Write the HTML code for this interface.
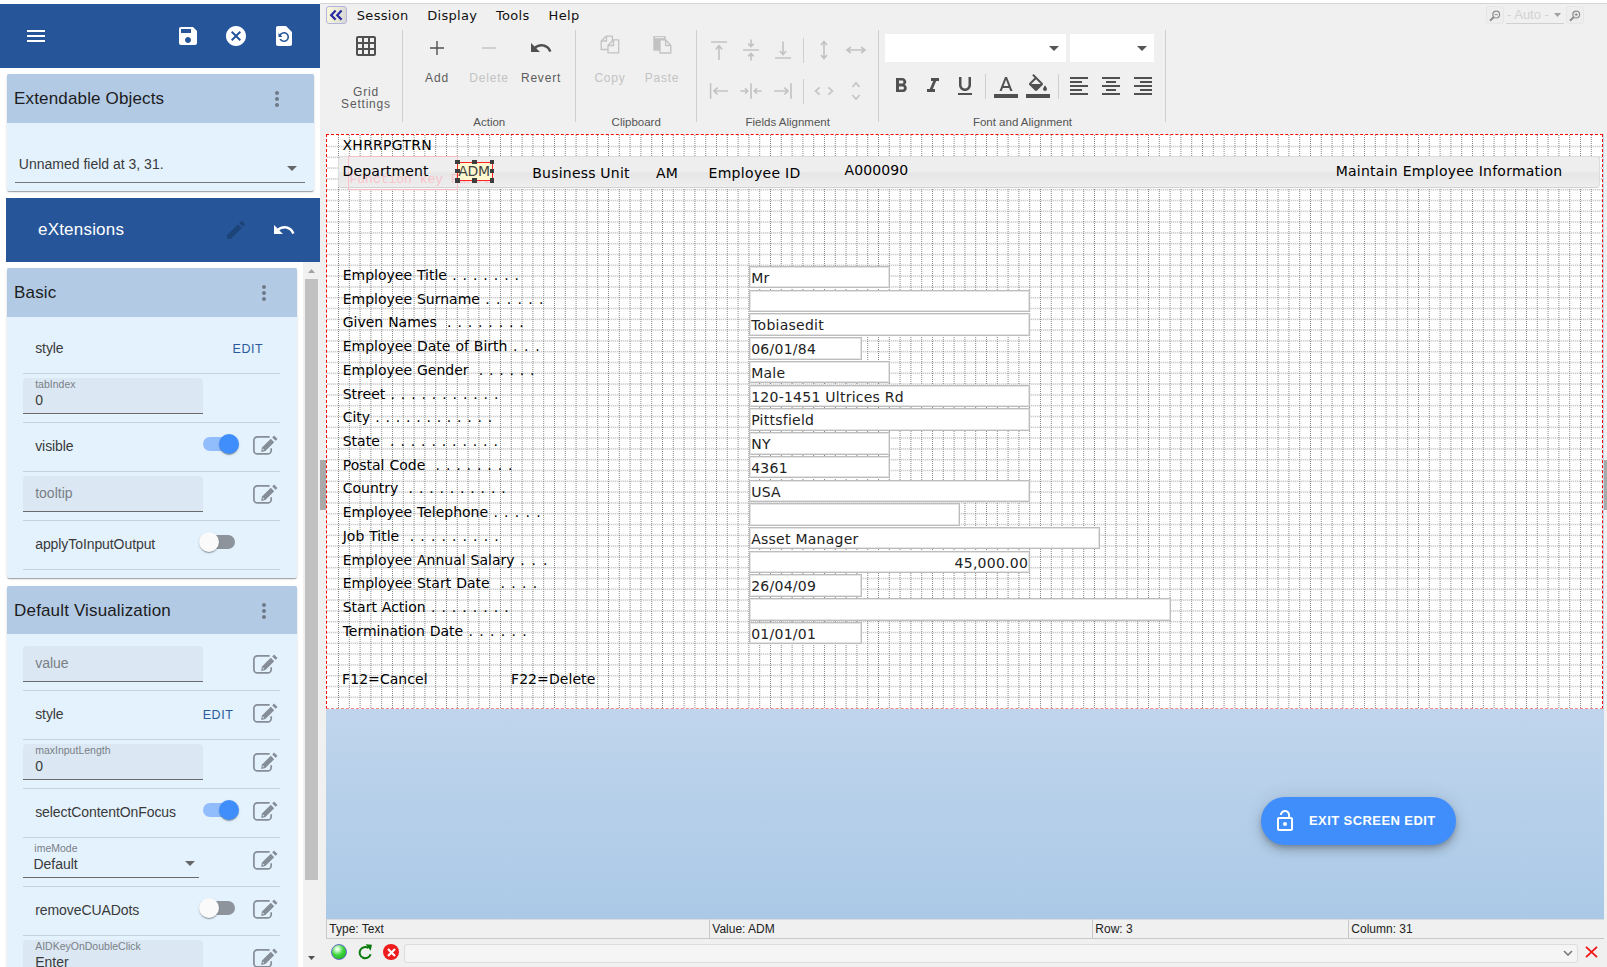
<!DOCTYPE html>
<html lang="en">
<head>
<meta charset="utf-8">
<title>Screen Edit</title>
<style>
*{box-sizing:border-box;margin:0;padding:0}
html,body{width:1607px;height:967px;overflow:hidden;background:#fff}
body{position:relative;font-family:"Liberation Sans",sans-serif;color:#212121}
.abs{position:absolute}
svg{display:block}
/* ---------- left panel ---------- */
#left{position:absolute;left:0;top:0;width:320px;height:967px;background:#fff;overflow:hidden}
.bluebar{position:absolute;background:#265699;color:#fff}
.card{position:absolute;background:#e4f2fe;box-shadow:0 2px 1px -1px rgba(0,0,0,.2),0 1px 1px 0 rgba(0,0,0,.14),0 1px 3px 0 rgba(0,0,0,.12);border-radius:2px}
.chead{position:absolute;left:0;top:0;right:0;height:48.5px;background:#b3cae5;border-radius:2px 2px 0 0}
.ctitle{position:absolute;left:7.6px;top:1px;line-height:48px;font-size:17px;letter-spacing:.15px;color:#1c1c1c;white-space:nowrap}
.dots{position:absolute;width:24px;height:24px;fill:#6f7a88}
.row{position:absolute;left:16.5px;width:257px;height:49px;border-bottom:1px solid #c5d3e0}
.lbl{position:absolute;left:12.2px;top:-1px;line-height:48px;font-size:14px;letter-spacing:-.08px;color:#3a3a3a;white-space:nowrap}
.fld{position:absolute;left:0;top:4px;width:180px;height:36px;background:#dbe8f4;border-bottom:1px solid #6b6b6b;border-radius:4px 4px 0 0}
.fld .fl{position:absolute;left:12.2px;top:0;font-size:10.5px;line-height:12px;color:#7a7f85;white-space:nowrap}
.fld .fv{position:absolute;left:12.2px;top:13px;font-size:14px;line-height:18px;color:#3a3a3a;white-space:nowrap}
.fld .ph{position:absolute;left:12.2px;top:0;font-size:14px;line-height:35px;color:#7a7f85;white-space:nowrap}
.editbtn{position:absolute;top:0;line-height:48px;font-size:12.5px;letter-spacing:.55px;color:#2a5a9c;white-space:nowrap}
.pe{position:absolute;left:229px;top:12px;width:26px;height:22px}
.sw{position:absolute;left:180.2px;top:14px;width:32px;height:14px;border-radius:7px;background:#8d949c}
.sw i{position:absolute;left:-4px;top:-3px;width:20px;height:20px;border-radius:50%;background:#fafafa;box-shadow:0 2px 1px -1px rgba(0,0,0,.2),0 1px 1px 0 rgba(0,0,0,.14),0 1px 3px 0 rgba(0,0,0,.12)}
.sw.on{background:#92bdfc}
.sw.on i{left:16px;background:#3f8efc}
/* ---------- main ---------- */
#main{position:absolute;left:320px;top:0;width:1287px;height:967px;background:#f0f0f0}
.dv{font-family:"DejaVu Sans","Liberation Sans",sans-serif}
.t{position:absolute;white-space:pre;font-family:"DejaVu Sans","Liberation Sans",sans-serif;font-size:14px;letter-spacing:0;line-height:16px;color:#000}
.inp{position:absolute;height:22.4px;background:#fff;border:1px solid #bdbdbd;box-shadow:inset 0 0 0 1px #e4e4e4;font-family:"DejaVu Sans","Liberation Sans",sans-serif;font-size:14px;letter-spacing:.25px;line-height:23px;color:#222;white-space:pre;padding:0 0 0 1.6px;overflow:hidden}
.tb{position:absolute;white-space:nowrap;font-size:12px;letter-spacing:.8px;color:#5c5c5c;line-height:14px;text-align:center}
.tb.dis{color:#c3c3c3}
.grp{position:absolute;white-space:nowrap;font-size:11.5px;color:#555;line-height:14px}
.vsep{position:absolute;width:1px;background:#cfcfcf}
.menu{position:absolute;top:8px;font-family:"DejaVu Sans","Liberation Sans",sans-serif;font-size:13px;letter-spacing:.3px;line-height:16px;color:#111;white-space:nowrap}
.st{position:absolute;top:919px;height:20px;border-left:1px solid #c8c8c8;border-top:1px solid #dcdcdc;border-bottom:1px solid #c8c8c8;font-size:12px;line-height:18px;padding-left:2.3px;color:#222;white-space:nowrap}
</style>
</head>
<body>
<div id="left">
<div class="bluebar" style="left:0;top:4px;width:320px;height:64px"></div>
<svg class="abs" style="left:24px;top:24px" width="24" height="24" viewBox="0 0 24 24" fill="#fff" ><path d="M3 18h18v-2H3v2zm0-5h18v-2H3v2zm0-7v2h18V6H3z"/></svg>
<svg class="abs" style="left:176px;top:24px" width="24" height="24" viewBox="0 0 24 24" fill="#fff" ><path d="M17 3H5c-1.11 0-2 .9-2 2v14c0 1.1.89 2 2 2h14c1.1 0 2-.9 2-2V7l-4-4zm-5 16c-1.66 0-3-1.34-3-3s1.34-3 3-3 3 1.34 3 3-1.34 3-3 3zm3-10H5V5h10v4z"/></svg>
<svg class="abs" style="left:224px;top:24px" width="24" height="24" viewBox="0 0 24 24" fill="#fff" ><path d="M12 2C6.47 2 2 6.47 2 12s4.47 10 10 10 10-4.47 10-10S17.53 2 12 2zm5 13.59L15.59 17 12 13.41 8.41 17 7 15.59 10.59 12 7 8.41 8.41 7 12 10.59 15.59 7 17 8.41 13.41 12 17 15.59z"/></svg>
<svg class="abs" style="left:272px;top:24px" width="24" height="24" viewBox="0 0 24 24" fill="#fff" ><path d="M14 2H6c-1.1 0-1.99.9-1.99 2L4 20c0 1.1.89 2 1.99 2H18c1.1 0 2-.9 2-2V8l-6-6zm-2 16c-2.05 0-3.81-1.24-4.58-3h1.71c.63.9 1.68 1.5 2.87 1.5 1.93 0 3.5-1.57 3.5-3.5S13.93 9.5 12 9.5c-1.35 0-2.52.78-3.1 1.9l1.6 1.6h-4V9l1.3 1.3C8.69 8.92 10.23 8 12 8c2.76 0 5 2.24 5 5s-2.24 5-5 5z"/></svg>
<div class="card" style="left:6.5px;top:74px;width:307px;height:117.3px"><div class="chead"></div><div class="ctitle">Extendable Objects</div><svg class="abs" style="left:258px;top:12.5px" width="24" height="24" viewBox="0 0 24 24" fill="#6f7a88" ><path d="M12 8c1.1 0 2-.9 2-2s-.9-2-2-2-2 .9-2 2 .9 2 2 2zm0 2c-1.1 0-2 .9-2 2s.9 2 2 2 2-.9 2-2-.9-2-2-2zm0 6c-1.1 0-2 .9-2 2s.9 2 2 2 2-.9 2-2-.9-2-2-2z"/></svg><div class="abs" style="left:12.3px;top:82px;font-size:14px;line-height:16px;color:#3a3a3a;white-space:nowrap">Unnamed field at 3, 31.</div><div class="abs" style="left:8px;top:108px;width:290px;height:1px;background:#777"></div><svg class="abs" style="left:280px;top:92px" width="10" height="5" viewBox="0 0 10 5"><path d="M0 0h10L5 5z" fill="#666"/></svg></div>
<div class="bluebar" style="left:6px;top:198px;width:314px;height:64px"></div>
<div class="abs" style="left:38px;top:198px;line-height:63px;font-size:17px;letter-spacing:.2px;color:#fff;white-space:nowrap">eXtensions</div>
<svg class="abs" style="left:224px;top:218px" width="24" height="24" viewBox="0 0 24 24" fill="#1d4479" ><path d="M3 17.25V21h3.75L17.81 9.94l-3.75-3.75L3 17.25zM20.71 7.04c.39-.39.39-1.02 0-1.41l-2.34-2.34c-.39-.39-1.02-.39-1.41 0l-1.83 1.83 3.75 3.75 1.83-1.83z"/></svg>
<svg class="abs" style="left:272px;top:218px" width="24" height="24" viewBox="0 0 24 24" fill="#fff" ><path d="M12.5 8c-2.65 0-5.05.99-6.9 2.6L2 7v9h9l-3.62-3.62c1.39-1.16 3.16-1.88 5.12-1.88 3.54 0 6.55 2.31 7.6 5.5l2.37-.78C21.08 11.03 17.15 8 12.5 8z"/></svg>
<div class="card" style="left:6.5px;top:268px;width:290px;height:309.8px"><div class="chead" style="height:48.5px"></div><div class="ctitle">Basic</div><svg class="abs" style="left:245px;top:12.5px" width="24" height="24" viewBox="0 0 24 24" fill="#6f7a88" ><path d="M12 8c1.1 0 2-.9 2-2s-.9-2-2-2-2 .9-2 2 .9 2 2 2zm0 2c-1.1 0-2 .9-2 2s.9 2 2 2 2-.9 2-2-.9-2-2-2zm0 6c-1.1 0-2 .9-2 2s.9 2 2 2 2-.9 2-2-.9-2-2-2z"/></svg><div class="row" style="top:57px"><div class="lbl">style</div><div class="editbtn" style="left:209.6px">EDIT</div></div><div class="row" style="top:106px"><div class="fld"><div class="fl">tabIndex</div><div class="fv">0</div></div></div><div class="row" style="top:155px"><div class="lbl">visible</div><div class="sw on"><i></i></div><svg class="abs" style="left:228px;top:11px" width="28" height="24" viewBox="0 0 28 24"><path d="M18.6 2.95H6.4a3.5 3.5 0 0 0-3.5 3.5v10a3.5 3.5 0 0 0 3.5 3.5h10.3a3.5 3.5 0 0 0 3.5-3.5v-2.3" fill="none" stroke="#858d96" stroke-width="1.7"/><path d="M10.1 17.9l.9-4.3 8.8-8.8 3.4 3.4-8.8 8.8z" fill="#858d96"/><path d="M11.6 16.3l.35-1.7 1.35 1.35z" fill="#e4f2fe"/><path d="M21.2 3.4l1.9-1.9 3.4 3.4-1.9 1.9z" fill="#858d96"/></svg></div><div class="row" style="top:204px"><div class="fld"><div class="ph">tooltip</div></div><svg class="abs" style="left:228px;top:11px" width="28" height="24" viewBox="0 0 28 24"><path d="M18.6 2.95H6.4a3.5 3.5 0 0 0-3.5 3.5v10a3.5 3.5 0 0 0 3.5 3.5h10.3a3.5 3.5 0 0 0 3.5-3.5v-2.3" fill="none" stroke="#858d96" stroke-width="1.7"/><path d="M10.1 17.9l.9-4.3 8.8-8.8 3.4 3.4-8.8 8.8z" fill="#858d96"/><path d="M11.6 16.3l.35-1.7 1.35 1.35z" fill="#e4f2fe"/><path d="M21.2 3.4l1.9-1.9 3.4 3.4-1.9 1.9z" fill="#858d96"/></svg></div><div class="row" style="top:253px"><div class="lbl">applyToInputOutput</div><div class="sw"><i></i></div></div></div>
<div class="card" style="left:6.5px;top:586px;width:290px;height:460px"><div class="chead" style="height:48px"></div><div class="ctitle">Default Visualization</div><svg class="abs" style="left:245px;top:12.5px" width="24" height="24" viewBox="0 0 24 24" fill="#6f7a88" ><path d="M12 8c1.1 0 2-.9 2-2s-.9-2-2-2-2 .9-2 2 .9 2 2 2zm0 2c-1.1 0-2 .9-2 2s.9 2 2 2 2-.9 2-2-.9-2-2-2zm0 6c-1.1 0-2 .9-2 2s.9 2 2 2 2-.9 2-2-.9-2-2-2z"/></svg><div class="row" style="top:56px"><div class="fld"><div class="ph">value</div></div><svg class="abs" style="left:228px;top:11px" width="28" height="24" viewBox="0 0 28 24"><path d="M18.6 2.95H6.4a3.5 3.5 0 0 0-3.5 3.5v10a3.5 3.5 0 0 0 3.5 3.5h10.3a3.5 3.5 0 0 0 3.5-3.5v-2.3" fill="none" stroke="#858d96" stroke-width="1.7"/><path d="M10.1 17.9l.9-4.3 8.8-8.8 3.4 3.4-8.8 8.8z" fill="#858d96"/><path d="M11.6 16.3l.35-1.7 1.35 1.35z" fill="#e4f2fe"/><path d="M21.2 3.4l1.9-1.9 3.4 3.4-1.9 1.9z" fill="#858d96"/></svg></div><div class="row" style="top:105px"><div class="lbl">style</div><div class="editbtn" style="left:179.7px">EDIT</div><svg class="abs" style="left:228px;top:11px" width="28" height="24" viewBox="0 0 28 24"><path d="M18.6 2.95H6.4a3.5 3.5 0 0 0-3.5 3.5v10a3.5 3.5 0 0 0 3.5 3.5h10.3a3.5 3.5 0 0 0 3.5-3.5v-2.3" fill="none" stroke="#858d96" stroke-width="1.7"/><path d="M10.1 17.9l.9-4.3 8.8-8.8 3.4 3.4-8.8 8.8z" fill="#858d96"/><path d="M11.6 16.3l.35-1.7 1.35 1.35z" fill="#e4f2fe"/><path d="M21.2 3.4l1.9-1.9 3.4 3.4-1.9 1.9z" fill="#858d96"/></svg></div><div class="row" style="top:154px"><div class="fld"><div class="fl">maxInputLength</div><div class="fv">0</div></div><svg class="abs" style="left:228px;top:11px" width="28" height="24" viewBox="0 0 28 24"><path d="M18.6 2.95H6.4a3.5 3.5 0 0 0-3.5 3.5v10a3.5 3.5 0 0 0 3.5 3.5h10.3a3.5 3.5 0 0 0 3.5-3.5v-2.3" fill="none" stroke="#858d96" stroke-width="1.7"/><path d="M10.1 17.9l.9-4.3 8.8-8.8 3.4 3.4-8.8 8.8z" fill="#858d96"/><path d="M11.6 16.3l.35-1.7 1.35 1.35z" fill="#e4f2fe"/><path d="M21.2 3.4l1.9-1.9 3.4 3.4-1.9 1.9z" fill="#858d96"/></svg></div><div class="row" style="top:203px"><div class="lbl">selectContentOnFocus</div><div class="sw on"><i></i></div><svg class="abs" style="left:228px;top:11px" width="28" height="24" viewBox="0 0 28 24"><path d="M18.6 2.95H6.4a3.5 3.5 0 0 0-3.5 3.5v10a3.5 3.5 0 0 0 3.5 3.5h10.3a3.5 3.5 0 0 0 3.5-3.5v-2.3" fill="none" stroke="#858d96" stroke-width="1.7"/><path d="M10.1 17.9l.9-4.3 8.8-8.8 3.4 3.4-8.8 8.8z" fill="#858d96"/><path d="M11.6 16.3l.35-1.7 1.35 1.35z" fill="#e4f2fe"/><path d="M21.2 3.4l1.9-1.9 3.4 3.4-1.9 1.9z" fill="#858d96"/></svg></div><div class="row" style="top:252px"><div class="abs" style="left:0;top:4px;width:176px;height:36px;border-bottom:1px solid #6b6b6b"><div class="abs" style="left:11.3px;top:0;font-size:10.5px;line-height:12px;color:#7a7f85">imeMode</div><div class="abs" style="left:10.4px;top:13.2px;font-size:14px;line-height:18px;color:#3a3a3a">Default</div><svg class="abs" style="left:162px;top:19.3px" width="10" height="5" viewBox="0 0 10 5"><path d="M0 0h10L5 5z" fill="#666"/></svg></div><svg class="abs" style="left:228px;top:11px" width="28" height="24" viewBox="0 0 28 24"><path d="M18.6 2.95H6.4a3.5 3.5 0 0 0-3.5 3.5v10a3.5 3.5 0 0 0 3.5 3.5h10.3a3.5 3.5 0 0 0 3.5-3.5v-2.3" fill="none" stroke="#858d96" stroke-width="1.7"/><path d="M10.1 17.9l.9-4.3 8.8-8.8 3.4 3.4-8.8 8.8z" fill="#858d96"/><path d="M11.6 16.3l.35-1.7 1.35 1.35z" fill="#e4f2fe"/><path d="M21.2 3.4l1.9-1.9 3.4 3.4-1.9 1.9z" fill="#858d96"/></svg></div><div class="row" style="top:301px"><div class="lbl">removeCUADots</div><div class="sw"><i></i></div><svg class="abs" style="left:228px;top:11px" width="28" height="24" viewBox="0 0 28 24"><path d="M18.6 2.95H6.4a3.5 3.5 0 0 0-3.5 3.5v10a3.5 3.5 0 0 0 3.5 3.5h10.3a3.5 3.5 0 0 0 3.5-3.5v-2.3" fill="none" stroke="#858d96" stroke-width="1.7"/><path d="M10.1 17.9l.9-4.3 8.8-8.8 3.4 3.4-8.8 8.8z" fill="#858d96"/><path d="M11.6 16.3l.35-1.7 1.35 1.35z" fill="#e4f2fe"/><path d="M21.2 3.4l1.9-1.9 3.4 3.4-1.9 1.9z" fill="#858d96"/></svg></div><div class="row" style="top:350px"><div class="fld"><div class="fl">AIDKeyOnDoubleClick</div><div class="fv">Enter</div></div><svg class="abs" style="left:228px;top:11px" width="28" height="24" viewBox="0 0 28 24"><path d="M18.6 2.95H6.4a3.5 3.5 0 0 0-3.5 3.5v10a3.5 3.5 0 0 0 3.5 3.5h10.3a3.5 3.5 0 0 0 3.5-3.5v-2.3" fill="none" stroke="#858d96" stroke-width="1.7"/><path d="M10.1 17.9l.9-4.3 8.8-8.8 3.4 3.4-8.8 8.8z" fill="#858d96"/><path d="M11.6 16.3l.35-1.7 1.35 1.35z" fill="#e4f2fe"/><path d="M21.2 3.4l1.9-1.9 3.4 3.4-1.9 1.9z" fill="#858d96"/></svg></div><div class="row" style="top:399px"><div class="lbl"></div></div></div>
<div class="abs" style="left:303px;top:262px;width:17px;height:705px;background:#f1f1f1"></div>
<div class="abs" style="left:305px;top:279px;width:13px;height:601px;background:#c1c1c1"></div>
<svg class="abs" style="left:308px;top:269px" width="7" height="4" viewBox="0 0 7 4"><path d="M0 4h7L3.5 0z" fill="#a3a3a3"/></svg>
<svg class="abs" style="left:308px;top:956px" width="7" height="4" viewBox="0 0 7 4"><path d="M0 0h7L3.5 4z" fill="#505050"/></svg>
</div>
<div id="main">
<div class="abs" style="left:0;top:0;width:1287px;height:3px;background:#fff"></div>
<div class="abs" style="left:0;top:3px;width:1287px;height:1px;background:#d4d4d4"></div>
<div class="abs" style="left:6px;top:6px;width:21px;height:18px;border:1px solid #b4b4dc;border-radius:3px;background:linear-gradient(100deg,#fafae0 0%,#ececd8 45%,#d6d6d6 100%)"></div>
<svg class="abs" style="left:9px;top:9px" width="15" height="12" viewBox="0 0 15 12" fill="none" stroke="#2a2aa4" stroke-width="2.2"><path d="M6.6 1.6L2.2 6.2l4.4 4.4M12.6 1.6L8.2 6.2l4.4 4.4"/></svg>
<div class="menu" style="left:36.8px">Session</div>
<div class="menu" style="left:107.2px">Display</div>
<div class="menu" style="left:176px">Tools</div>
<div class="menu" style="left:228.6px">Help</div>
<div class="abs" style="left:1166px;top:6px;width:18px;height:18px;border:1px solid #e6e6e6;border-radius:3px;background:#eeeeee"></div>
<div class="abs" style="left:1246px;top:6px;width:18px;height:18px;border:1px solid #e6e6e6;border-radius:3px;background:#eeeeee"></div>
<svg class="abs" style="left:1169px;top:9.6px" width="12" height="12" viewBox="0 0 12 12" fill="none" stroke="#8e8e8e"><circle cx="7.2" cy="4.6" r="3.4" stroke-width="1.2"/><path d="M4.6 7.2L1 10.8" stroke-width="2"/><path d="M5.6 4.6h3.2" stroke-width="1"/></svg>
<svg class="abs" style="left:1249px;top:9.6px" width="12" height="12" viewBox="0 0 12 12" fill="none" stroke="#8e8e8e"><circle cx="7.2" cy="4.6" r="3.4" stroke-width="1.2"/><path d="M4.6 7.2L1 10.8" stroke-width="2"/><path d="M5.6 4.6h3.2" stroke-width="1"/><path d="M7.2 3v3.2" stroke-width="1"/></svg>
<div class="abs" style="left:1187px;top:7px;font-size:13px;line-height:16px;color:#d2d2d2;white-space:nowrap">- Auto -</div>
<div class="abs" style="left:1186px;top:23px;width:58px;height:1px;background:#d0d0d0"></div>
<svg class="abs" style="left:1234px;top:13px" width="7" height="4" viewBox="0 0 7 4"><path d="M0 0h7L3.5 4z" fill="#a0a0a0"/></svg>
<svg class="abs" style="left:34px;top:34px" width="24" height="24" viewBox="0 0 24 24" fill="#505050" ><path d="M20 2H4c-1.1 0-2 .9-2 2v16c0 1.1.9 2 2 2h16c1.1 0 2-.9 2-2V4c0-1.1-.9-2-2-2zM8 20H4v-4h4v4zm0-6H4v-4h4v4zm0-6H4V4h4v4zm6 12h-4v-4h4v4zm0-6h-4v-4h4v4zm0-6h-4V4h4v4zm6 12h-4v-4h4v4zm0-6h-4v-4h4v4zm0-6h-4V4h4v4z"/></svg>
<div class="tb" style="left:21px;top:86px;width:50px;line-height:12px">Grid<br>Settings</div>
<div class="vsep" style="left:82px;top:30px;height:92px"></div>
<div class="vsep" style="left:255px;top:30px;height:92px"></div>
<div class="vsep" style="left:376px;top:30px;height:92px"></div>
<div class="vsep" style="left:558px;top:30px;height:92px"></div>
<div class="vsep" style="left:845px;top:30px;height:92px"></div>
<svg class="abs" style="left:110px;top:41px" width="14" height="14" viewBox="0 0 14 14" stroke="#505050" stroke-width="1.4"><path d="M7 0v14M0 7h14"/></svg>
<div class="tb" style="left:97px;top:71px;width:40px">Add</div>
<svg class="abs" style="left:162px;top:41px" width="14" height="14" viewBox="0 0 14 14" stroke="#c2c2c2" stroke-width="1.4"><path d="M0 7h14"/></svg>
<div class="tb dis" style="left:144px;top:71px;width:50px">Delete</div>
<svg class="abs" style="left:209px;top:36px" width="24" height="24" viewBox="0 0 24 24" fill="#505050" ><path d="M12.5 8c-2.65 0-5.05.99-6.9 2.6L2 7v9h9l-3.62-3.62c1.39-1.16 3.16-1.88 5.12-1.88 3.54 0 6.55 2.31 7.6 5.5l2.37-.78C21.08 11.03 17.15 8 12.5 8z"/></svg>
<div class="tb" style="left:196px;top:71px;width:50px">Revert</div>
<div class="grp" style="left:153.3px;top:114.5px">Action</div>
<svg class="abs" style="left:280px;top:35px" width="20" height="19" viewBox="0 0 20 19" fill="#f0f0f0" stroke="#c2c2c2" stroke-width="1.3" stroke-linejoin="round"><path d="M6.5 1.1H12.4V14.5H1.2V6z"/><path d="M6.5 1.1V6H1.2" fill="none"/><path d="M13.5 4.8H18.7V17.9H8V10.5z"/><path d="M13.5 4.8V10.5H8" fill="none"/></svg>
<div class="tb dis" style="left:265px;top:71px;width:50px">Copy</div>
<svg class="abs" style="left:332px;top:35px" width="20" height="19" viewBox="0 0 20 19" fill="#f0f0f0" stroke="#c2c2c2" stroke-width="1.3" stroke-linejoin="round"><path d="M1.3 1.1H13.6V15.7H1.3z" fill="#c2c2c2" stroke="none"/><path d="M3 2.1H12V3.1H3z" stroke="none"/><path d="M8 4.8H13.6L18.8 10.5V18H8z"/><path d="M13.6 4.8V10.5H18.8" fill="none"/></svg>
<div class="tb dis" style="left:317px;top:71px;width:50px">Paste</div>
<div class="grp" style="left:291.6px;top:114.5px">Clipboard</div>
<svg class="abs" style="left:387px;top:38px" width="24" height="24" viewBox="0 0 24 24" fill="none" stroke="#c2c2c2" stroke-width="1.6"><path d="M4 4h16M12 22V8M8.8 11.4l3.2-3.6 3.2 3.6"/></svg>
<svg class="abs" style="left:419px;top:38px" width="24" height="24" viewBox="0 0 24 24" fill="none" stroke="#c2c2c2" stroke-width="1.6"><path d="M4 12h16M12 1.6v6.6M9.2 5.6L12 8.6l2.8-3M12 22.4v-6.6M9.2 18.4L12 15.4l2.8 3"/></svg>
<svg class="abs" style="left:451px;top:38px" width="24" height="24" viewBox="0 0 24 24" fill="none" stroke="#c2c2c2" stroke-width="1.6"><path d="M4 20h16M12 3.4v13M8.8 13l3.2 3.6 3.2-3.6"/></svg>
<svg class="abs" style="left:492px;top:38px" width="24" height="24" viewBox="0 0 24 24" fill="none" stroke="#c2c2c2" stroke-width="1.6"><path d="M12 3.6v16.8M9 7l3-3.6L15 7M9 17l3 3.6 3-3.6"/></svg>
<svg class="abs" style="left:524px;top:38px" width="24" height="24" viewBox="0 0 24 24" fill="none" stroke="#c2c2c2" stroke-width="1.6"><path d="M3.2 12h17.6M6.8 9L3 12l3.8 3M17.2 9l3.8 3-3.8 3"/></svg>
<svg class="abs" style="left:387px;top:79px" width="24" height="24" viewBox="0 0 24 24" fill="none" stroke="#c2c2c2" stroke-width="1.6"><path d="M3.6 4.2v15.6M7 12h14M10.6 8.6L7 12l3.6 3.4"/></svg>
<svg class="abs" style="left:419px;top:79px" width="24" height="24" viewBox="0 0 24 24" fill="none" stroke="#c2c2c2" stroke-width="1.6"><path d="M12 4.2v15.6M1.4 12h7.4M6 9.2L8.8 12 6 14.8M22.6 12h-7.4M18 9.2L15.2 12l2.8 2.8"/></svg>
<svg class="abs" style="left:451px;top:79px" width="24" height="24" viewBox="0 0 24 24" fill="none" stroke="#c2c2c2" stroke-width="1.6"><path d="M20 4.2v15.6M3 12h14M13.4 8.6L17 12l-3.6 3.4"/></svg>
<svg class="abs" style="left:492px;top:79px" width="24" height="24" viewBox="0 0 24 24" fill="none" stroke="#c2c2c2" stroke-width="1.6"><path d="M7.6 8.4L3.6 12l4 3.6M16.4 8.4l4 3.6-4 3.6"/></svg>
<svg class="abs" style="left:524px;top:79px" width="24" height="24" viewBox="0 0 24 24" fill="none" stroke="#c2c2c2" stroke-width="1.6"><path d="M8.4 8L12 4l3.6 4M8.4 16l3.6 4 3.6-4"/></svg>
<div class="vsep" style="left:483px;top:38px;height:25px"></div>
<div class="vsep" style="left:483px;top:79px;height:25px"></div>
<div class="vsep" style="left:665px;top:74px;height:25px"></div>
<div class="vsep" style="left:738px;top:74px;height:25px"></div>
<div class="grp" style="left:425.5px;top:114.5px">Fields Alignment</div>
<div class="abs" style="left:565px;top:34px;width:181px;height:28px;background:#fff"></div>
<div class="abs" style="left:750px;top:34px;width:84px;height:28px;background:#fff"></div>
<svg class="abs" style="left:729px;top:46px" width="10" height="5" viewBox="0 0 10 5"><path d="M0 0h10L5 5z" fill="#555"/></svg>
<svg class="abs" style="left:817px;top:46px" width="10" height="5" viewBox="0 0 10 5"><path d="M0 0h10L5 5z" fill="#555"/></svg>
<svg class="abs" style="left:569px;top:74px" width="24" height="24" viewBox="0 0 24 24" fill="#505050" ><path d="M15.6 10.79c.97-.67 1.65-1.77 1.65-2.79 0-2.26-1.75-4-4-4H7v14h7.04c2.09 0 3.71-1.7 3.71-3.79 0-1.52-.86-2.82-2.15-3.42zM10 6.5h3c.83 0 1.5.67 1.5 1.5s-.67 1.5-1.5 1.5h-3v-3zm3.5 9H10v-3h3.5c.83 0 1.5.67 1.5 1.5s-.67 1.5-1.5 1.5z"/></svg>
<svg class="abs" style="left:601px;top:74px" width="24" height="24" viewBox="0 0 24 24" fill="#505050" ><path d="M10 4v3h2.21l-3.42 8H6v3h8v-3h-2.21l3.42-8H18V4z"/></svg>
<svg class="abs" style="left:633px;top:74px" width="24" height="24" viewBox="0 0 24 24" fill="#505050" ><path d="M12 17c3.31 0 6-2.69 6-6V3h-2.5v8c0 1.93-1.57 3.5-3.5 3.5S8.5 12.93 8.5 11V3H6v8c0 3.31 2.69 6 6 6zm-7 2v2h14v-2H5z"/></svg>
<svg class="abs" style="left:674px;top:74px" width="24" height="24" viewBox="0 0 24 24" fill="#505050" ><path d="M0 20h24v4H0zM11 3L5.5 17h2.25l1.12-3h6.25l1.12 3h2.25L13 3h-2zm-1.38 9L12 5.67 14.38 12H9.62z"/></svg>
<svg class="abs" style="left:706px;top:74px" width="24" height="24" viewBox="0 0 24 24" fill="#505050" ><path d="M16.56 8.94L7.62 0 6.21 1.41l2.38 2.38-5.15 5.15c-.59.59-.59 1.54 0 2.12l5.5 5.5c.29.29.68.44 1.06.44s.77-.15 1.06-.44l5.5-5.5c.59-.58.59-1.53 0-2.12zM5.21 10L10 5.21 14.79 10H5.21zM19 11.5s-2 2.17-2 3.5c0 1.1.9 2 2 2s2-.9 2-2c0-1.33-2-3.5-2-3.5zM0 20h24v4H0z"/></svg>
<svg class="abs" style="left:747px;top:74px" width="24" height="24" viewBox="0 0 24 24" fill="#505050" ><path d="M15 15H3v2h12v-2zm0-8H3v2h12V7zM3 13h18v-2H3v2zm0 8h18v-2H3v2zM3 3v2h18V3H3z"/></svg>
<svg class="abs" style="left:779px;top:74px" width="24" height="24" viewBox="0 0 24 24" fill="#505050" ><path d="M7 15v2h10v-2H7zm-4 6h18v-2H3v2zm0-8h18v-2H3v2zm4-6v2h10V7H7zM3 3v2h18V3H3z"/></svg>
<svg class="abs" style="left:811px;top:74px" width="24" height="24" viewBox="0 0 24 24" fill="#505050" ><path d="M3 21h18v-2H3v2zm6-4h12v-2H9v2zm-6-4h18v-2H3v2zm6-4h12V7H9v2zM3 3v2h18V3H3z"/></svg>
<div class="grp" style="left:652.9px;top:114.5px">Font and Alignment</div>
<div class="abs" style="left:6px;top:134px;width:1278px;height:785px;background:linear-gradient(#c0d5ec 0%,#c0d5ec 73%,#abc9e7 100%)"></div>
<div class="abs" style="left:6px;top:134px;width:1277px;height:575px;background:#fff;border:1px dashed #f00;border-bottom-color:#ff8585;overflow:hidden"><svg class="abs" style="left:0;top:0" width="1275" height="573" fill="none"><path stroke="#f0f0f0" stroke-width="2" d="M0 11.5H1275M0 22.3H1275M0 33.1H1275M0 43.9H1275M0 54.7H1275M0 65.5H1275M0 76.3H1275M0 87.1H1275M0 97.9H1275M0 108.7H1275M0 119.5H1275M0 130.3H1275M0 141.1H1275M0 151.9H1275M0 162.7H1275M0 173.5H1275M0 184.3H1275M0 195.1H1275M0 205.9H1275M0 216.7H1275M0 227.5H1275M0 238.3H1275M0 249.1H1275M0 259.9H1275M0 270.7H1275M0 281.5H1275M0 292.3H1275M0 303.1H1275M0 313.9H1275M0 324.7H1275M0 335.5H1275M0 346.3H1275M0 357.1H1275M0 367.9H1275M0 378.7H1275M0 389.5H1275M0 400.3H1275M0 411.1H1275M0 421.9H1275M0 432.7H1275M0 443.5H1275M0 454.3H1275M0 465.1H1275M0 475.9H1275M0 486.7H1275M0 497.5H1275M0 508.3H1275M0 519.1H1275M0 529.9H1275M0 540.7H1275M0 551.5H1275M0 562.3H1275"/><path stroke="#cdcdcd" stroke-width="1.2" stroke-dasharray="1 1" d="M0 11.5H1275M0 22.3H1275M0 33.1H1275M0 43.9H1275M0 54.7H1275M0 65.5H1275M0 76.3H1275M0 87.1H1275M0 97.9H1275M0 108.7H1275M0 119.5H1275M0 130.3H1275M0 141.1H1275M0 151.9H1275M0 162.7H1275M0 173.5H1275M0 184.3H1275M0 195.1H1275M0 205.9H1275M0 216.7H1275M0 227.5H1275M0 238.3H1275M0 249.1H1275M0 259.9H1275M0 270.7H1275M0 281.5H1275M0 292.3H1275M0 303.1H1275M0 313.9H1275M0 324.7H1275M0 335.5H1275M0 346.3H1275M0 357.1H1275M0 367.9H1275M0 378.7H1275M0 389.5H1275M0 400.3H1275M0 411.1H1275M0 421.9H1275M0 432.7H1275M0 443.5H1275M0 454.3H1275M0 465.1H1275M0 475.9H1275M0 486.7H1275M0 497.5H1275M0 508.3H1275M0 519.1H1275M0 529.9H1275M0 540.7H1275M0 551.5H1275M0 562.3H1275"/><path stroke="#868686" stroke-width="1" stroke-dasharray="1 1" d="M11.5 0V573M22.3 0V573M33.1 0V573M43.9 0V573M54.7 0V573M65.5 0V573M76.3 0V573M87.1 0V573M97.9 0V573M108.7 0V573M119.5 0V573M130.3 0V573M141.1 0V573M151.9 0V573M162.7 0V573M173.5 0V573M184.3 0V573M195.1 0V573M205.9 0V573M216.7 0V573M227.5 0V573M238.3 0V573M249.1 0V573M259.9 0V573M270.7 0V573M281.5 0V573M292.3 0V573M303.1 0V573M313.9 0V573M324.7 0V573M335.5 0V573M346.3 0V573M357.1 0V573M367.9 0V573M378.7 0V573M389.5 0V573M400.3 0V573M411.1 0V573M421.9 0V573M432.7 0V573M443.5 0V573M454.3 0V573M465.1 0V573M475.9 0V573M486.7 0V573M497.5 0V573M508.3 0V573M519.1 0V573M529.9 0V573M540.7 0V573M551.5 0V573M562.3 0V573M573.1 0V573M583.9 0V573M594.7 0V573M605.5 0V573M616.3 0V573M627.1 0V573M637.9 0V573M648.7 0V573M659.5 0V573M670.3 0V573M681.1 0V573M691.9 0V573M702.7 0V573M713.5 0V573M724.3 0V573M735.1 0V573M745.9 0V573M756.7 0V573M767.5 0V573M778.3 0V573M789.1 0V573M799.9 0V573M810.7 0V573M821.5 0V573M832.3 0V573M843.1 0V573M853.9 0V573M864.7 0V573M875.5 0V573M886.3 0V573M897.1 0V573M907.9 0V573M918.7 0V573M929.5 0V573M940.3 0V573M951.1 0V573M961.9 0V573M972.7 0V573M983.5 0V573M994.3 0V573M1005.1 0V573M1015.9 0V573M1026.7 0V573M1037.5 0V573M1048.3 0V573M1059.1 0V573M1069.9 0V573M1080.7 0V573M1091.5 0V573M1102.3 0V573M1113.1 0V573M1123.9 0V573M1134.7 0V573M1145.5 0V573M1156.3 0V573M1167.1 0V573M1177.9 0V573M1188.7 0V573M1199.5 0V573M1210.3 0V573M1221.1 0V573M1231.9 0V573M1242.7 0V573M1253.5 0V573M1264.3 0V573"/></svg>
<div class="abs" style="left:10.5px;top:21px;width:1262px;height:31.5px;border:1px solid #dcdcdc;border-bottom-color:#d2d2d2;border-radius:4px;background:linear-gradient(#eee 0,#eee 50%,#e6e6e6 53%,#eee 100%)"></div>
<div class="abs" style="left:22.5px;top:36.8px;font-family:'Liberation Mono',monospace;font-size:13px;line-height:16px;color:#ffb6c1;opacity:.75;white-space:pre">Function key Panel</div>
<div class="abs" style="left:21px;top:20.5px;width:110px;height:34px;border:1px solid rgba(255,182,193,.8)"></div>
<div class="t" style="left:15.5px;top:2.06px;letter-spacing:0.259px;">XHRRPGTRN</div>
<div class="t" style="left:15.5px;top:27.96px;letter-spacing:0.131px;">Department</div>
<div class="t" style="left:205.3px;top:29.96px;letter-spacing:0.209px;">Business Unit</div>
<div class="t" style="left:329.0px;top:29.96px;letter-spacing:0.144px;">AM</div>
<div class="t" style="left:381.5px;top:29.86px;letter-spacing:0.31px;">Employee ID</div>
<div class="t" style="left:517.5px;top:26.86px;letter-spacing:0.111px;">A000090</div>
<div class="t" style="left:1008.7px;top:27.86px;letter-spacing:0.249px;">Maintain Employee Information</div>
<div class="abs" style="left:130px;top:26.5px;width:35.5px;height:19px;background:#fdf8cf;border:1px solid #f22"></div>
<div class="t" style="left:131.3px;top:27.96px;letter-spacing:-0.369px;color:#444">ADM</div>
<div class="abs" style="left:128.2px;top:24.5px;width:4.6px;height:4.6px;background:#3c3c3c"></div>
<div class="abs" style="left:128.2px;top:33.9px;width:4.6px;height:4.6px;background:#3c3c3c"></div>
<div class="abs" style="left:128.2px;top:43.2px;width:4.6px;height:4.6px;background:#3c3c3c"></div>
<div class="abs" style="left:145.3px;top:24.5px;width:4.6px;height:4.6px;background:#3c3c3c"></div>
<div class="abs" style="left:145.3px;top:43.2px;width:4.6px;height:4.6px;background:#3c3c3c"></div>
<div class="abs" style="left:162.5px;top:24.5px;width:4.6px;height:4.6px;background:#3c3c3c"></div>
<div class="abs" style="left:162.5px;top:33.9px;width:4.6px;height:4.6px;background:#3c3c3c"></div>
<div class="abs" style="left:162.5px;top:43.2px;width:4.6px;height:4.6px;background:#3c3c3c"></div>
<div class="t" style="left:15.7px;top:131.86px;word-spacing:0.5px">Employee Title<span style="letter-spacing:0.747px;word-spacing:0"> . . . . . . .</span></div>
<div class="inp" style="left:421.6px;top:131.0px;width:141px;">Mr</div>
<div class="t" style="left:15.7px;top:155.59px;word-spacing:0.5px">Employee Surname<span style="letter-spacing:0.924px;word-spacing:0"> . . . . . .</span></div>
<div class="inp" style="left:421.6px;top:154.73px;width:281.5px;"></div>
<div class="t" style="left:15.7px;top:179.32px;word-spacing:0.5px">Given Names<span style="letter-spacing:0.708px;word-spacing:0">  . . . . . . . .</span></div>
<div class="inp" style="left:421.6px;top:178.46px;width:281.5px;">Tobiasedit</div>
<div class="t" style="left:15.7px;top:203.05px;word-spacing:0.5px">Employee Date of Birth<span style="letter-spacing:1.097px;word-spacing:0"> . . .</span></div>
<div class="inp" style="left:421.6px;top:202.19px;width:113.2px;">06/01/84</div>
<div class="t" style="left:15.7px;top:226.78px;word-spacing:0.5px">Employee Gender<span style="letter-spacing:0.676px;word-spacing:0">  . . . . . .</span></div>
<div class="inp" style="left:421.6px;top:225.92px;width:141px;">Male</div>
<div class="t" style="left:15.7px;top:250.51px;word-spacing:0.5px">Street<span style="letter-spacing:0.728px;word-spacing:0"> . . . . . . . . . . .</span></div>
<div class="inp" style="left:421.6px;top:249.65px;width:281.5px;">120-1451 Ultrices Rd</div>
<div class="t" style="left:15.7px;top:274.24px;word-spacing:0.5px">City<span style="letter-spacing:0.665px;word-spacing:0"> . . . . . . . . . . . .</span></div>
<div class="inp" style="left:421.6px;top:273.38px;width:281.5px;">Pittsfield</div>
<div class="t" style="left:15.7px;top:297.97px;word-spacing:0.5px">State<span style="letter-spacing:0.715px;word-spacing:0">  . . . . . . . . . . .</span></div>
<div class="inp" style="left:421.6px;top:297.11px;width:141px;">NY</div>
<div class="t" style="left:15.7px;top:321.7px;word-spacing:0.5px">Postal Code<span style="letter-spacing:0.72px;word-spacing:0">  . . . . . . . .</span></div>
<div class="inp" style="left:421.6px;top:320.84px;width:141px;">4361</div>
<div class="t" style="left:15.7px;top:345.43px;word-spacing:0.5px">Country<span style="letter-spacing:0.693px;word-spacing:0">  . . . . . . . . . .</span></div>
<div class="inp" style="left:421.6px;top:344.57px;width:281.5px;">USA</div>
<div class="t" style="left:15.7px;top:369.16px;word-spacing:0.5px">Employee Telephone<span style="letter-spacing:0.894px;word-spacing:0"> . . . . .</span></div>
<div class="inp" style="left:421.6px;top:368.3px;width:211px;"></div>
<div class="t" style="left:15.7px;top:392.89px;word-spacing:0.5px">Job Title<span style="letter-spacing:0.827px;word-spacing:0">  . . . . . . . . .</span></div>
<div class="inp" style="left:421.6px;top:392.03px;width:351.5px;">Asset Manager</div>
<div class="t" style="left:15.7px;top:416.62px;word-spacing:0.5px">Employee Annual Salary<span style="letter-spacing:1.219px;word-spacing:0"> . . .</span></div>
<div class="inp" style="left:421.6px;top:415.76px;width:281.5px;text-align:right;padding-right:1px;">45,000.00</div>
<div class="t" style="left:15.7px;top:440.35px;word-spacing:0.5px">Employee Start Date<span style="letter-spacing:0.945px;word-spacing:0">  . . . .</span></div>
<div class="inp" style="left:421.6px;top:439.49px;width:113.2px;">26/04/09</div>
<div class="t" style="left:15.7px;top:464.08px;word-spacing:0.5px">Start Action<span style="letter-spacing:0.787px;word-spacing:0"> . . . . . . . .</span></div>
<div class="inp" style="left:421.6px;top:463.22px;width:422px;"></div>
<div class="t" style="left:15.7px;top:487.81px;word-spacing:0.5px">Termination Date<span style="letter-spacing:0.911px;word-spacing:0"> . . . . . .</span></div>
<div class="inp" style="left:421.6px;top:486.95px;width:113.2px;">01/01/01</div>
<div class="t" style="left:15.1px;top:535.66px;letter-spacing:0.052px;">F12=Cancel</div>
<div class="t" style="left:184.0px;top:535.66px;letter-spacing:0.077px;">F22=Delete</div></div>
<div class="abs" style="left:0;top:460px;width:6px;height:50px;background:#a9a9a9"></div>
<div class="abs" style="left:1284px;top:134px;width:3px;height:833px;background:#f0f0f0"></div>
<div class="abs" style="left:1284px;top:460px;width:3px;height:50px;background:#a9a9a9"></div>
<div class="abs" style="left:941px;top:797px;width:195px;height:48px;border-radius:24px;background:#3f8efc;box-shadow:0 3px 5px -1px rgba(0,0,0,.2),0 6px 10px 0 rgba(0,0,0,.14),0 1px 18px 0 rgba(0,0,0,.12)"></div>
<svg class="abs" style="left:953px;top:809px" width="24" height="24" viewBox="0 0 24 24" fill="#fff" ><path d="M12 17c1.1 0 2-.9 2-2s-.9-2-2-2-2 .9-2 2 .9 2 2 2zm6-9h-1V6c0-2.76-2.24-5-5-5S7 3.24 7 6h1.9c0-1.71 1.39-3.1 3.1-3.1 1.71 0 3.1 1.39 3.1 3.1v2H6c-1.1 0-2 .9-2 2v10c0 1.1.9 2 2 2h12c1.1 0 2-.9 2-2V10c0-1.1-.9-2-2-2zm0 12H6V10h12v10z"/></svg>
<div class="abs" style="left:989px;top:797px;line-height:47px;font-size:13px;font-weight:bold;letter-spacing:.42px;color:#fff;white-space:nowrap">EXIT SCREEN EDIT</div>
<div class="abs" style="left:6px;top:919px;width:1278px;height:48px;background:#f0f0f0"></div>
<div class="st" style="left:6px;width:383px">Type: Text</div>
<div class="st" style="left:389px;width:383px">Value: ADM</div>
<div class="st" style="left:772px;width:256px">Row: 3</div>
<div class="st" style="left:1028px;width:256px">Column: 31</div>
<div class="abs" style="left:11px;top:943.8px;width:16px;height:16px;border-radius:50%;border:1px solid #6a6acb;background:radial-gradient(circle at 38% 30%,#fff 0,#d8ffd8 12%,#3fd63f 45%,#12a312 100%)"></div>
<svg class="abs" style="left:37px;top:943px" width="17" height="18" viewBox="0 0 17 18" fill="none"><path d="M13.6 11.2A5.6 5.6 0 1 1 11.4 5" stroke="#0a7a0a" stroke-width="2"/><path d="M8.6 1.2l6.4.6-1.4 6z" fill="#0a7a0a"/></svg>
<div class="abs" style="left:62.8px;top:943.8px;width:16.4px;height:16.4px;border-radius:50%;background:#ee1c1c"></div>
<svg class="abs" style="left:66.5px;top:947.5px" width="9" height="9" viewBox="0 0 9 9" stroke="#fff" stroke-width="2.2"><path d="M1 1l7 7M8 1L1 8"/></svg>
<div class="abs" style="left:84px;top:944px;width:1174px;height:19px;border:1px solid #dcdcdc;border-radius:3px;background:#f5f5f5"></div>
<svg class="abs" style="left:1243px;top:950px" width="10" height="6" viewBox="0 0 10 6" fill="none" stroke="#777" stroke-width="1.6"><path d="M1 1l4 4 4-4"/></svg>
<svg class="abs" style="left:1264.5px;top:946px" width="13" height="12" viewBox="0 0 13 12" stroke="#f01414" stroke-width="1.8"><path d="M1 .8l11 10.4M12 .8L1 11.2"/></svg>
</div>
</body>
</html>
